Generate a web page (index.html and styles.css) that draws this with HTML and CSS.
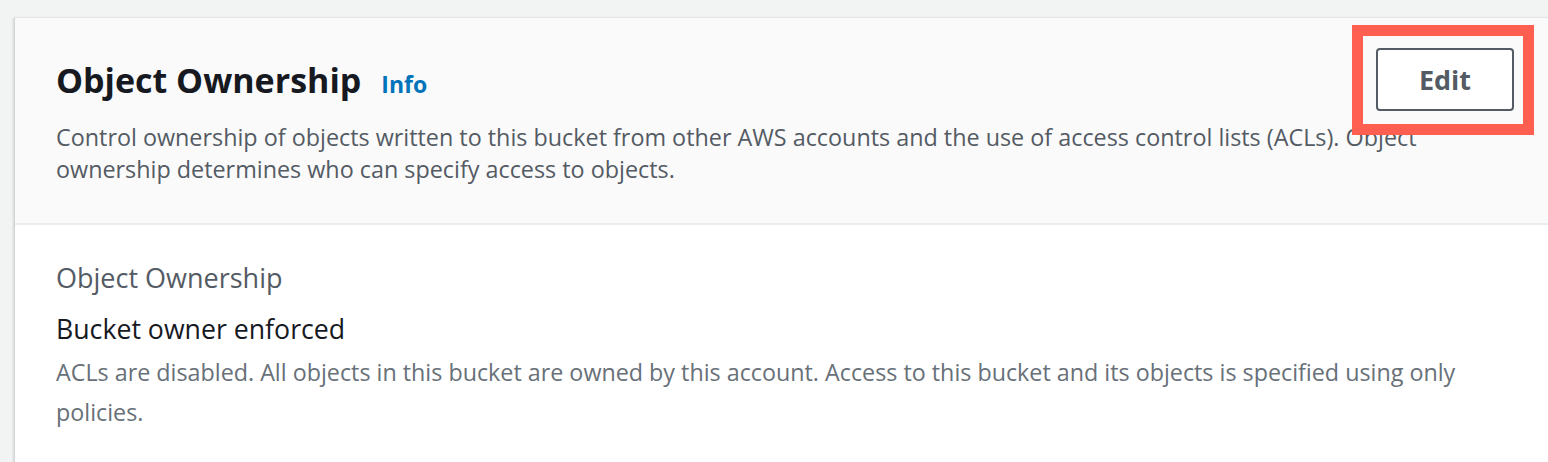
FILE: index.html
```html
<!DOCTYPE html>
<html lang="en">
<head>
<meta charset="utf-8">
<title>Object Ownership</title>
<link rel="stylesheet" href="styles.css">
</head>
<body>
<div class="page">
  <section class="card">
    <header class="card-header">
      <div class="title-row">
        <div class="title">
          <h2 class="heading">Object Ownership</h2>
          <a class="info" href="#">Info</a>
        </div>
        <button class="btn" type="button">Edit</button>
      </div>
      <p class="description">Control ownership of objects written to this bucket from other AWS accounts and the use of access control lists (ACLs). Object ownership determines who can specify access to objects.</p>
    </header>
    <div class="card-body">
      <div class="label">Object Ownership</div>
      <div class="value">Bucket owner enforced</div>
      <p class="value-desc">ACLs are disabled. All objects in this bucket are owned by this account. Access to this bucket and its objects is specified using only policies.</p>
    </div>
  </section>
  <div class="highlight"></div>
</div>
</body>
</html>
```

FILE: styles.css
```css
html, body {
  margin: 0;
  padding: 0;
  background: #f2f3f3;
  overflow: hidden;
}

body {
  font-family: "Open Sans", "Noto Sans", "Liberation Sans", sans-serif;
  width: 1548px;
  height: 462px;
}

.page {
  position: relative;
  padding: 17px 0 0 14px;
}

.card {
  width: 1541px;
  box-sizing: border-box;
  background: #ffffff;
  border-top: 1px solid #e4e7e7;
  border-left: 1px solid #d0d5d5;
  box-shadow: -1px 1px 2px rgba(0, 28, 36, 0.12);
}

.card-header {
  background: #fafafa;
  border-bottom: 2px solid #eaeded;
  padding: 30px 41px 38px 41px;
}

.title-row {
  display: flex;
  align-items: center;
  justify-content: space-between;
}

.title {
  display: flex;
  align-items: baseline;
  gap: 20px;
}

.heading {
  margin: 0;
  font-size: 34px;
  line-height: 44px;
  font-weight: 700;
  color: #16191f;
}

.info {
  font-size: 23px;
  font-weight: 700;
  color: #0073bb;
  text-decoration: none;
}

.btn {
  width: 138px;
  height: 63px;
  box-sizing: border-box;
  border: 2px solid #545b64;
  border-radius: 4px;
  background: #ffffff;
  color: #545b64;
  font-family: inherit;
  font-size: 27px;
  font-weight: 700;
  padding: 0;
}

.description {
  margin: 10px 0 0 0;
  font-size: 23.35px;
  line-height: 32px;
  color: #545b64;
}

.card-body {
  padding: 35px 41px 40px 41px;
}

.label {
  font-size: 27px;
  line-height: 36px;
  color: #545b64;
}

.value {
  margin-top: 15px;
  font-size: 26.7px;
  line-height: 36px;
  color: #16191f;
}

.value-desc {
  margin: 5px 0 0 0;
  font-size: 23.3px;
  line-height: 40px;
  color: #687078;
}

.highlight {
  position: absolute;
  left: 1352px;
  top: 25px;
  width: 182px;
  height: 110px;
  box-sizing: border-box;
  border: 11px solid #ff5f50;
}
```
